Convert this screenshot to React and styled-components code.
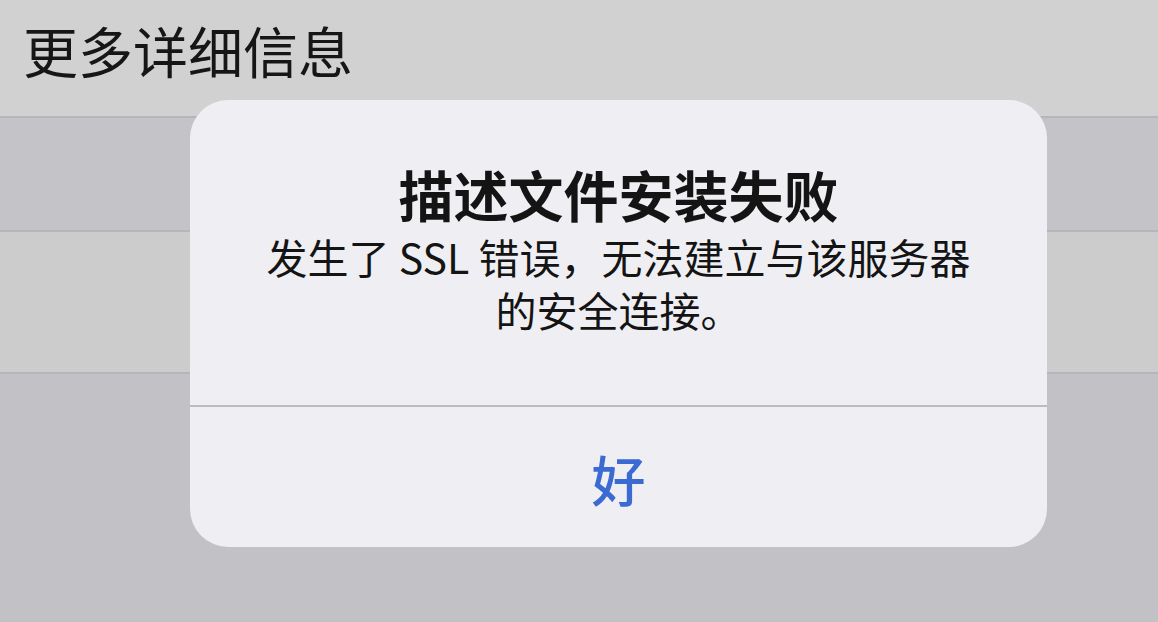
import React from "react";
import styled, { createGlobalStyle } from "styled-components";

const GlobalStyle = createGlobalStyle`
  html, body {
    margin: 0;
    padding: 0;
    background: #c2c1c6;
  }
  body {
    font-family: "Noto Sans CJK SC", "Noto Sans", "Liberation Sans", sans-serif;
  }
`;

const Screen = styled.div`
  position: relative;
  width: 100%;
  height: 622px;
  overflow: hidden;
  display: flex;
  flex-direction: column;
  background: #c2c1c6;
`;

const Header = styled.div`
  height: 118px;
  box-sizing: border-box;
  padding: 17px 0 0 23px;
  background: #d1d1d1;
  border-bottom: 2px solid #b6b6b9;
  font-size: 55px;
  line-height: 64px;
  color: #161616;
`;

const Row = styled.div`
  height: ${({ $h }) => $h}px;
  flex: ${({ $fill }) => ($fill ? 1 : "none")};
  background: ${({ $tone }) => $tone};
  border-bottom: ${({ $fill }) => ($fill ? "none" : "2px solid #b6b6b9")};
`;

const Alert = styled.div`
  position: absolute;
  left: 190px;
  top: 100px;
  width: 857px;
  height: 447px;
  display: flex;
  flex-direction: column;
  background: #efeff3;
  border-radius: 38px;
  overflow: hidden;
`;

const Body = styled.div`
  padding: 61px 30px 0;
  height: 305px;
  box-sizing: border-box;
  text-align: center;
  color: #141414;
`;

const Title = styled.div`
  font-size: 55px;
  line-height: 64px;
  font-weight: 700;
`;

const Message = styled.div`
  margin-top: 5px;
  font-size: 41px;
  line-height: 53px;
  font-weight: 400;
`;

const Action = styled.div`
  flex: 1;
  display: flex;
  align-items: center;
  justify-content: center;
  border-top: 2px solid #bcbcc0;
  font-size: 54px;
  font-weight: 500;
  color: #3b6bd2;
  padding-top: 2px;
`;

export default function App() {
  return (
    <>
      <GlobalStyle />
      <Screen>
        <Header>更多详细信息</Header>
        <Row $h={112} $tone="#c4c3c8" />
        <Row $h={140} $tone="#cccccc" />
        <Row $fill $tone="#c2c1c6" />
        <Alert>
          <Body>
            <Title>描述文件安装失败</Title>
            <Message>
              发生了 SSL 错误，无法建立与该服务器
              <br />
              的安全连接。
            </Message>
          </Body>
          <Action>好</Action>
        </Alert>
      </Screen>
    </>
  );
}
